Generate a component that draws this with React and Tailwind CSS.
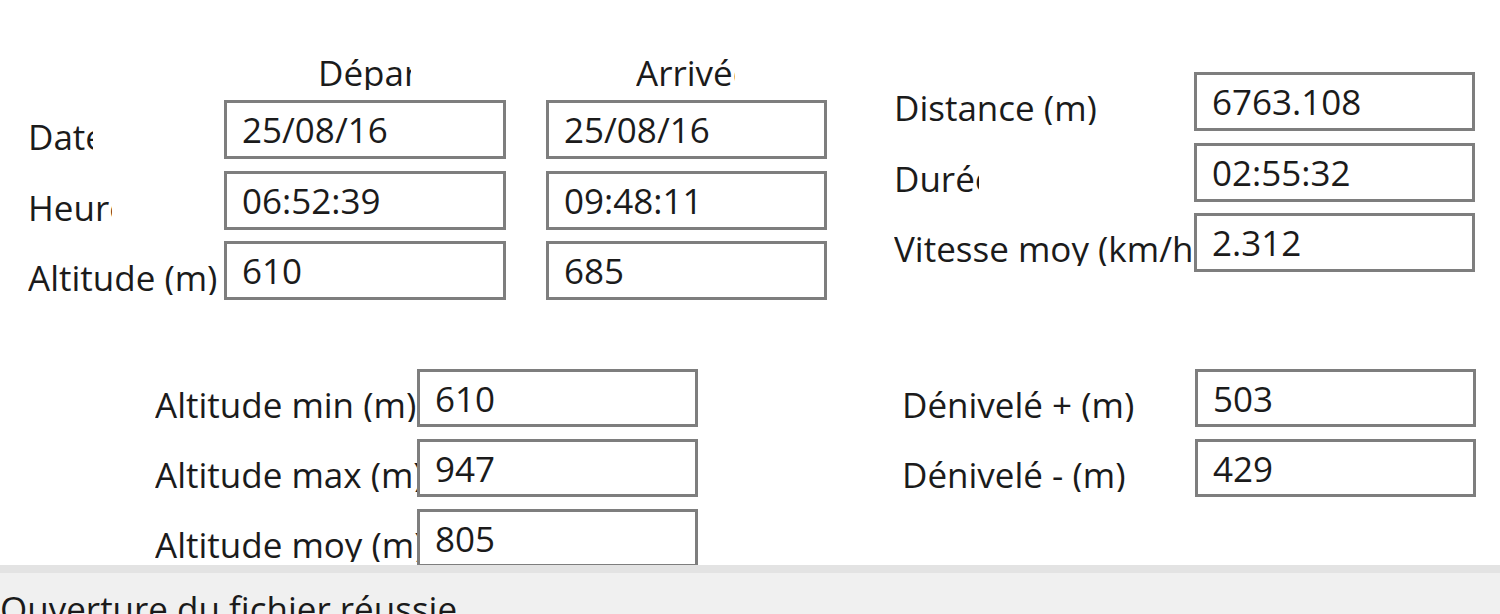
const font = { fontFamily: '"Open Sans", "Noto Sans", sans-serif' };

const Field = ({ value, w = "w-[282px]", h = "h-[59px]" }) => (
  <div
    className={`${w} ${h} shrink-0 border-[3px] border-[#7e7e7e] bg-white flex items-center pl-[15px] text-[35px] leading-[35px] font-medium text-[#1b1b1b] overflow-hidden whitespace-nowrap`}
  >
    {value}
  </div>
);

const Label = ({ text, box, clip, h = "h-[59px]", pad = "pt-[14px]" }) => (
  <div className={`${box} ${h} shrink-0 flex items-center ${pad}`}>
    <span
      className={`${clip} block overflow-hidden whitespace-nowrap text-[35px] leading-[35px] font-medium text-[#1b1b1b]`}
    >
      {text}
    </span>
  </div>
);

const topRows = [
  { label: "Date", clip: "w-[65px]", dep: "25/08/16", arr: "25/08/16" },
  { label: "Heure", clip: "w-[84px]", dep: "06:52:39", arr: "09:48:11" },
  { label: "Altitude (m)", clip: "w-[196px]", dep: "610", arr: "685" },
];

const statsRows = [
  { label: "Distance (m)", clip: "w-[300px]", value: "6763.108" },
  { label: "Durée", clip: "w-[85px]", value: "02:55:32" },
  { label: "Vitesse moy (km/h)", clip: "w-[300px]", value: "2.312" },
];

const altRows = [
  { label: "Altitude min (m)", value: "610" },
  { label: "Altitude max (m)", value: "947" },
  { label: "Altitude moy (m)", value: "805" },
];

const denivRows = [
  { label: "Dénivelé + (m)", value: "503" },
  { label: "Dénivelé - (m)", value: "429" },
];

export default function App() {
  return (
    <div className="w-[1500px] h-[614px] overflow-hidden bg-white flex flex-col" style={font}>
      <div className="h-[565px] shrink-0 overflow-hidden bg-white">
        {/* départ / arrivée + résumé */}
        <div className="flex pt-[44px]">
          <div className="ml-[28px] flex flex-col">
            <div className="h-[56px] flex items-center">
              <div className="w-[196px] shrink-0" />
              <div className="w-[282px] shrink-0 pl-[94px]">
                <span className="block w-[93px] overflow-hidden whitespace-nowrap text-[35px] leading-[35px] font-medium text-[#1b1b1b]">
                  Départ
                </span>
              </div>
              <div className="w-[40px] shrink-0" />
              <div className="w-[281px] shrink-0 pl-[90px]">
                <span className="block w-[99px] overflow-hidden whitespace-nowrap text-[35px] leading-[35px] font-medium text-[#1b1b1b]">
                  Arrivée
                </span>
              </div>
            </div>
            <div className="flex flex-col gap-[11.5px]">
              {topRows.map((r) => (
                <div key={r.label} className="flex">
                  <Label text={r.label} box="w-[196px]" clip={r.clip} />
                  <Field value={r.dep} />
                  <div className="w-[40px] shrink-0" />
                  <Field value={r.arr} w="w-[281px]" />
                </div>
              ))}
            </div>
          </div>

          <div className="ml-[67px] mt-[28px] flex flex-col gap-[11.5px]">
            {statsRows.map((r) => (
              <div key={r.label} className="flex">
                <Label text={r.label} box="w-[300px]" clip={r.clip} pad="pt-[12px]" />
                <Field value={r.value} w="w-[281px]" />
              </div>
            ))}
          </div>
        </div>

        {/* altitudes + dénivelés */}
        <div className="flex pt-[69px]">
          <div className="ml-[155px] flex flex-col gap-[12px]">
            {altRows.map((r) => (
              <div key={r.label} className="flex">
                <Label text={r.label} box="w-[262px]" clip="w-[262px]" h="h-[58px]" pad="pt-[12px]" />
                <Field value={r.value} w="w-[281px]" h="h-[58px]" />
              </div>
            ))}
          </div>

          <div className="ml-[204px] flex flex-col gap-[12px]">
            {denivRows.map((r) => (
              <div key={r.label} className="flex">
                <Label text={r.label} box="w-[293px]" clip="w-[293px]" h="h-[58px]" pad="pt-[12px]" />
                <Field value={r.value} w="w-[281px]" h="h-[58px]" />
              </div>
            ))}
          </div>
        </div>
      </div>

      {/* barre d'état */}
      <div className="flex-1 bg-[#f0f0f0] flex flex-col">
        <div className="h-[8px] bg-[#e3e3e3]" />
        <div className="pt-[18px] text-[35px] leading-[35px] font-medium text-[#1b1b1b] whitespace-nowrap">
          Ouverture du fichier réussie
        </div>
      </div>
    </div>
  );
}
